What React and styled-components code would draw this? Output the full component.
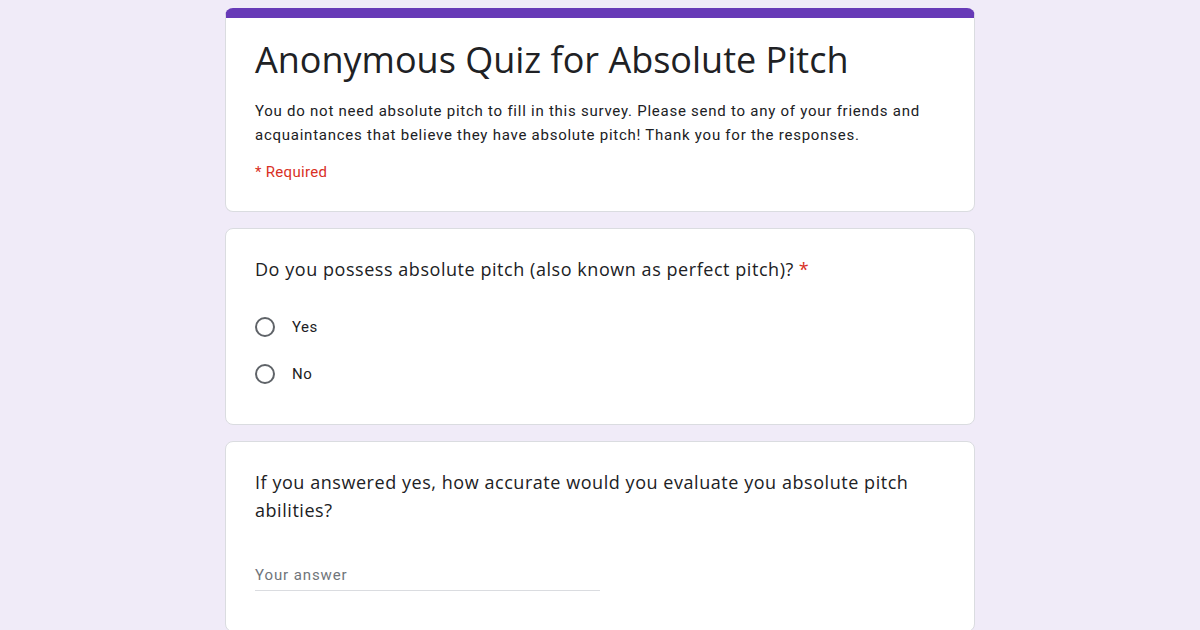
import styled, { createGlobalStyle } from "styled-components";

const Global = createGlobalStyle`
body {
  margin: 0;
  background: #f0ebf8;
  font-family: Roboto, "Liberation Sans", sans-serif;
  color: #202124;
}
`

const Page = styled.div`
width: 750px;
margin: 0 auto;
padding-top: 8px;
display: flex;
flex-direction: column;
gap: 16px;
`
const Card = styled.div`
background: #fff;
border: 1px solid #dadce0;
border-radius: 8px;
padding: ${p => p.$pad || "24px 29px"};
`
const HeaderCard = styled(Card)`
border-top: 10px solid #673ab7;
padding: 18px 29px 30px;
`
const Title = styled.h1`
margin: 0;
font-family: "Open Sans", sans-serif;
font-weight: 400;
font-size: 36px;
line-height: 48px;
color: #202124;
`
const Description = styled.p`
margin: 15px 0 0;
font-size: 15px;
line-height: 24px;
letter-spacing: 0.75px;
color: #202124;
`
const Required = styled.div`
margin-top: 16px;
font-size: 15px;
letter-spacing: 0.3px;
color: #d93025;
`
const Question = styled.div`
font-family: "Open Sans", sans-serif;
font-size: 18px;
line-height: 28px;
letter-spacing: 0.55px;
color: #202124;
`
const Star = styled.span`
color: #d93025;
margin-left: 5px;
`
const Options = styled.div`
display: flex;
flex-direction: column;
gap: 27px;
margin-top: 34px;
`
const Option = styled.label`
display: flex;
align-items: center;
gap: 17px;
font-size: 15px;
letter-spacing: 0.5px;
`
const Radio = styled.span`
width: 16px;
height: 16px;
border: 2px solid #5f6368;
border-radius: 50%;
`
const Answer = styled.div`
margin-top: 42px;
width: 345px;
padding-bottom: 6px;
border-bottom: 1px solid #dadce0;
font-size: 15px;
letter-spacing: 0.9px;
color: #70757a;
`

export default function App() {
    return(
        <Page>
            <Global />
            <HeaderCard>
                <Title>Anonymous Quiz for Absolute Pitch</Title>
                <Description>
                    You do not need absolute pitch to fill in this survey. Please send to any of your friends and acquaintances that believe they have absolute pitch! Thank you for the responses.
                </Description>
                <Required>* Required</Required>
            </HeaderCard>
            <Card $pad="26px 29px 40px">
                <Question>Do you possess absolute pitch (also known as perfect pitch)?<Star>*</Star></Question>
                <Options>
                    <Option><Radio /> Yes</Option>
                    <Option><Radio /> No</Option>
                </Options>
            </Card>
            <Card $pad="26px 29px 40px">
                <Question>If you answered yes, how accurate would you evaluate you absolute pitch abilities?</Question>
                <Answer>Your answer</Answer>
            </Card>
        </Page>
    )
}
